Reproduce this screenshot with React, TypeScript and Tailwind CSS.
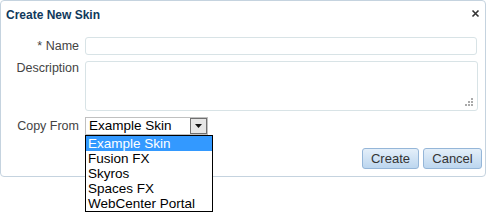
import React from "react";

const options = ["Example Skin", "Fusion FX", "Skyros", "Spaces FX", "WebCenter Portal"];

export default function App() {
  return (
    <div className="w-[488px] h-[213px] bg-white text-[12.5px] text-[#333] font-['Liberation_Sans',Arial,sans-serif]">
      <div className="relative w-[486px] h-[177px] border border-[#c5d3df] rounded-[4px] bg-white">
        <div className="flex items-center justify-between h-[27px] pl-[5px] pr-[5px]">
          <h2 className="font-bold text-[12px] text-[#10395c]">Create New Skin</h2>
          <button className="w-[10px] h-[10px] flex items-center justify-center mt-[-2px]">
            <svg width="9" height="9" viewBox="0 0 9 9">
              <path d="M1.5 1.5 L7.5 7.5 M7.5 1.5 L1.5 7.5" stroke="#333" strokeWidth="1.6" />
            </svg>
          </button>
        </div>

        <div className="grid grid-cols-[78px_1fr] gap-x-[6px] gap-y-[6px] mt-[9px] pr-[8px]">
          <label className="text-right leading-[18px] text-[#444]">* Name</label>
          <input className="h-[18px] border border-[#d8e3e6] rounded-[3px] outline-none" />

          <label className="text-right leading-[14px] text-[#444]">Description</label>
          <div className="relative h-[50px] border border-[#d8e3e6] rounded-[3px] mr-[-1px]">
            <svg className="absolute right-[4px] bottom-[4px]" width="8" height="8" viewBox="0 0 8 8">
              <rect x="6" y="0" width="2" height="2" fill="#aaa" />
              <rect x="3" y="3" width="2" height="2" fill="#aaa" />
              <rect x="6" y="3" width="2" height="2" fill="#aaa" />
              <rect x="0" y="6" width="2" height="2" fill="#aaa" />
              <rect x="3" y="6" width="2" height="2" fill="#aaa" />
              <rect x="6" y="6" width="2" height="2" fill="#aaa" />
            </svg>
          </div>

          <label className="text-right leading-[18px] text-[#444]">Copy From</label>
          <div className="relative w-[123px] h-[18px] flex items-center border border-[#c0c0c0] bg-white">
            <span className="flex-1 pl-[3px] text-[13.5px] text-black leading-[16px]">Example Skin</span>
            <span className="w-[17px] h-[16px] flex items-center justify-center border border-[#707070] bg-[#e6e6e6]">
              <svg width="7" height="4" viewBox="0 0 7 4">
                <path d="M0 0 H7 L3.5 4 Z" fill="#111" />
              </svg>
            </span>
            <ul className="absolute left-[-1px] top-[17px] w-[128px] border border-black bg-white text-[13.5px] text-black z-10">
              {options.map((o, i) => (
                <li
                  key={o}
                  className={
                    i === 0
                      ? "h-[15px] leading-[15px] pl-[2px] bg-[#3399ff] text-white"
                      : "h-[15px] leading-[15px] pl-[2px]"
                  }
                >
                  {o}
                </li>
              ))}
            </ul>
          </div>
        </div>

        <div className="flex justify-end gap-[4px] pr-[3px] mt-[13px]">
          <button className="w-[57px] h-[21px] border border-[#95b6d8] rounded-[3px] bg-gradient-to-b from-[#e4eff9] to-[#bcd6ef] text-[13px] text-[#333]">
            Create
          </button>
          <button className="w-[59px] h-[21px] border border-[#95b6d8] rounded-[3px] bg-gradient-to-b from-[#e4eff9] to-[#bcd6ef] text-[13px] text-[#333]">
            Cancel
          </button>
        </div>
      </div>
    </div>
  );
}
